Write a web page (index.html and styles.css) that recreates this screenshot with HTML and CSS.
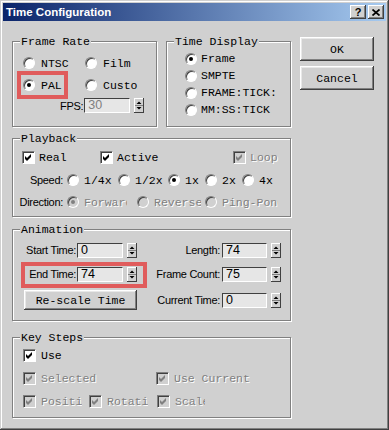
FILE: index.html
```html
<!DOCTYPE html>
<html lang="en">
  <head>
    <meta charset="UTF-8" />
    <title>Time Configuration</title>
    <link rel="stylesheet" href="styles.css">
  </head>
  <body>
    <div class="window">
      <div class="titlebar">
        <span class="title">Time Configuration</span>
        <div class="caption-buttons">
          <span class="cap-btn">?</span>
          <span class="cap-btn">
            <svg width="8" height="7" viewBox="0 0 8 7"><path d="M0.5 0.5L7.5 6.5M7.5 0.5L0.5 6.5" stroke="#000" stroke-width="1.7"/></svg>
          </span>
        </div>
      </div>

      <div class="client">
        <div class="groups">
          <div class="top-row">
            <fieldset class="group frame-rate">
              <legend>Frame Rate</legend>
              <div class="fr-options">
                <div class="opt"><span class="radio"></span>NTSC</div>
                <div class="opt"><span class="radio"></span>Film</div>
                <div class="opt marked"><span class="radio on"></span>PAL<span class="mark mark-pal"></span></div>
                <div class="opt"><span class="radio"></span>Custo</div>
              </div>
              <div class="fps-row">
                <span class="flbl">FPS:</span>
                <span class="field dim-field">30</span>
                <span class="spin"><svg width="10" height="15" viewBox="0 0 10 15"><path d="M1 7.5H9" stroke="#808080"/><path d="M2.5 6L5 3.5L7.5 6Z M2.5 9L5 11.5L7.5 9Z" fill="#000"/></svg></span>
              </div>
            </fieldset>

            <fieldset class="group time-display">
              <legend>Time Display</legend>
              <div class="td-options">
                <div class="opt"><span class="radio on"></span>Frame</div>
                <div class="opt"><span class="radio"></span>SMPTE</div>
                <div class="opt"><span class="radio"></span>FRAME:TICK:</div>
                <div class="opt"><span class="radio"></span>MM:SS:TICK</div>
              </div>
            </fieldset>
          </div>

          <fieldset class="group playback">
            <legend>Playback</legend>
            <div class="pb-checks">
              <div class="chk real"><span class="check"><svg width="11" height="11" viewBox="0 0 11 11"><path d="M2 4L4 6L8 2V5L4 9L2 7Z" fill="#000"/></svg></span>Real</div>
              <div class="chk active"><span class="check"><svg width="11" height="11" viewBox="0 0 11 11"><path d="M2 4L4 6L8 2V5L4 9L2 7Z" fill="#000"/></svg></span>Active</div>
              <div class="chk dim"><span class="check dis"><svg width="11" height="11" viewBox="0 0 11 11"><path d="M2 4L4 6L8 2V5L4 9L2 7Z" fill="#808080"/></svg></span>Loop</div>
            </div>
            <div class="pb-row">
              <span class="row-lbl">Speed:</span>
              <div class="opt sp-quarter"><span class="radio"></span>1/4x</div>
              <div class="opt sp-half"><span class="radio"></span>1/2x</div>
              <div class="opt sp-one"><span class="radio on"></span>1x</div>
              <div class="opt sp-two"><span class="radio"></span>2x</div>
              <div class="opt"><span class="radio"></span>4x</div>
            </div>
            <div class="pb-row">
              <span class="row-lbl">Direction:</span>
              <div class="opt dim dir-fwd"><span class="radio dis on"></span><span class="clip">Forward</span></div>
              <div class="opt dim dir-rev"><span class="radio dis"></span><span class="clip">Reverse</span></div>
              <div class="opt dim dir-ping"><span class="radio dis"></span><span class="clip">Ping-Pong</span></div>
            </div>
          </fieldset>

          <fieldset class="group animation">
            <legend>Animation</legend>
            <div class="anim-grid">
              <div class="spin-field">
                <span class="flbl left-lbl">Start Time:</span>
                <span class="field">0</span>
                <span class="spin"><svg width="10" height="15" viewBox="0 0 10 15"><path d="M1 7.5H9" stroke="#808080"/><path d="M2.5 6L5 3.5L7.5 6Z M2.5 9L5 11.5L7.5 9Z" fill="#000"/></svg></span>
              </div>
              <div class="spin-field">
                <span class="flbl right-lbl">Length:</span>
                <span class="field">74</span>
                <span class="spin"><svg width="10" height="15" viewBox="0 0 10 15"><path d="M1 7.5H9" stroke="#808080"/><path d="M2.5 6L5 3.5L7.5 6Z M2.5 9L5 11.5L7.5 9Z" fill="#000"/></svg></span>
              </div>
              <div class="spin-field marked">
                <span class="flbl left-lbl">End Time:</span>
                <span class="field">74</span>
                <span class="spin"><svg width="10" height="15" viewBox="0 0 10 15"><path d="M1 7.5H9" stroke="#808080"/><path d="M2.5 6L5 3.5L7.5 6Z M2.5 9L5 11.5L7.5 9Z" fill="#000"/></svg></span>
                <span class="mark mark-end"></span>
              </div>
              <div class="spin-field">
                <span class="flbl right-lbl">Frame Count:</span>
                <span class="field">75</span>
                <span class="spin"><svg width="10" height="15" viewBox="0 0 10 15"><path d="M1 7.5H9" stroke="#808080"/><path d="M2.5 6L5 3.5L7.5 6Z M2.5 9L5 11.5L7.5 9Z" fill="#000"/></svg></span>
              </div>
              <div class="btn rescale">Re-scale Time</div>
              <div class="spin-field">
                <span class="flbl right-lbl">Current Time:</span>
                <span class="field">0</span>
                <span class="spin"><svg width="10" height="15" viewBox="0 0 10 15"><path d="M1 7.5H9" stroke="#808080"/><path d="M2.5 6L5 3.5L7.5 6Z M2.5 9L5 11.5L7.5 9Z" fill="#000"/></svg></span>
              </div>
            </div>
          </fieldset>

          <fieldset class="group key-steps">
            <legend>Key Steps</legend>
            <div class="ks-rows">
              <div class="chk"><span class="check"><svg width="11" height="11" viewBox="0 0 11 11"><path d="M2 4L4 6L8 2V5L4 9L2 7Z" fill="#000"/></svg></span>Use</div>
              <div class="ks-row">
                <div class="chk dim ks-selected"><span class="check dis"><svg width="11" height="11" viewBox="0 0 11 11"><path d="M2 4L4 6L8 2V5L4 9L2 7Z" fill="#808080"/></svg></span>Selected</div>
                <div class="chk dim"><span class="check dis"><svg width="11" height="11" viewBox="0 0 11 11"><path d="M2 4L4 6L8 2V5L4 9L2 7Z" fill="#808080"/></svg></span>Use Current</div>
              </div>
              <div class="ks-row">
                <div class="chk dim ks-pos"><span class="check dis"><svg width="11" height="11" viewBox="0 0 11 11"><path d="M2 4L4 6L8 2V5L4 9L2 7Z" fill="#808080"/></svg></span><span class="clip">Position</span></div>
                <div class="chk dim ks-rot"><span class="check dis"><svg width="11" height="11" viewBox="0 0 11 11"><path d="M2 4L4 6L8 2V5L4 9L2 7Z" fill="#808080"/></svg></span><span class="clip">Rotation</span></div>
                <div class="chk dim ks-scale"><span class="check dis"><svg width="11" height="11" viewBox="0 0 11 11"><path d="M2 4L4 6L8 2V5L4 9L2 7Z" fill="#808080"/></svg></span><span class="clip">Scale</span></div>
              </div>
            </div>
          </fieldset>
        </div>

        <div class="buttons">
          <div class="btn">OK</div>
          <div class="btn">Cancel</div>
        </div>
      </div>
    </div>
  </body>
</html>
```

FILE: styles.css
```css
:root {
  --face: #d0d0d0;
  --shadow: #808080;
  --dark: #404040;
  --light: #ffffff;
  --field: #e6e6e6;
  --mark: #e05c5c;
}

body {
  margin: 0;
  background: var(--face);
  font-family: "Liberation Mono", monospace;
  font-size: 11.5px;
  color: #000;
  overflow: hidden;
}

.window {
  width: 389px;
  height: 430px;
  box-sizing: border-box;
  padding: 3px;
  background: var(--face);
  box-shadow: inset -1px -1px var(--dark), inset 1px 1px var(--face),
    inset -2px -2px var(--shadow), inset 2px 2px var(--light);
}

/* title bar */
.titlebar {
  height: 18px;
  display: flex;
  align-items: center;
  justify-content: space-between;
  padding: 0 2px 0 3px;
  background: linear-gradient(to right, #0a246a, #a6caf0);
}

.title {
  font-family: "Liberation Sans", sans-serif;
  font-weight: bold;
  font-size: 11.5px;
  color: #fff;
}

.caption-buttons {
  display: flex;
  gap: 2px;
}

.cap-btn {
  width: 16px;
  height: 14px;
  box-sizing: border-box;
  display: flex;
  align-items: center;
  justify-content: center;
  background: var(--face);
  font: bold 11px "Liberation Sans", sans-serif;
  box-shadow: inset -1px -1px var(--dark), inset 1px 1px var(--light),
    inset -2px -2px var(--shadow);
}

/* client area */
.client {
  display: flex;
  gap: 9px;
  padding: 14px 0 0 9px;
}

.groups {
  width: 279px;
  display: flex;
  flex-direction: column;
}

.top-row {
  display: flex;
  gap: 9px;
}

.group {
  margin: 0;
  padding: 0;
  min-width: 0;
  box-sizing: border-box;
  border: 1px solid var(--shadow);
  box-shadow: 1px 1px 0 var(--light), inset 1px 1px 0 var(--light);
}

.group legend {
  margin-left: 7px;
  padding: 0 1px;
  line-height: 13px;
  background: var(--face);
}

.frame-rate {
  width: 145px;
  height: 92px;
  padding-top: 8px;
}

.time-display {
  width: 125px;
  height: 92px;
  padding-top: 2px;
}

.playback {
  height: 85px;
  margin-top: 5px;
  padding-top: 5px;
}

.animation {
  height: 98px;
  margin-top: 6px;
  padding-top: 6px;
}

.key-steps {
  height: 87px;
  margin-top: 10px;
  padding-top: 4px;
}

/* radios and checkboxes */
.opt,
.chk {
  display: flex;
  align-items: center;
  height: 14px;
  white-space: nowrap;
  position: relative;
}

.radio {
  flex: none;
  width: 12px;
  height: 12px;
  box-sizing: border-box;
  border-radius: 50%;
  border: 1px solid;
  border-color: var(--shadow) var(--light) var(--light) var(--shadow);
  background: var(--light);
  box-shadow: inset 1px 1px 0 var(--dark);
  position: relative;
  margin-right: 5px;
}

.radio.on::after {
  content: "";
  position: absolute;
  left: 3px;
  top: 3px;
  width: 4px;
  height: 4px;
  border-radius: 50%;
  background: #000;
}

.radio.dis {
  background: var(--face);
}

.radio.dis.on::after {
  background: var(--shadow);
}

.check {
  flex: none;
  width: 13px;
  height: 13px;
  box-sizing: border-box;
  border: 1px solid;
  border-color: var(--shadow) var(--light) var(--light) var(--shadow);
  background: var(--light);
  box-shadow: inset 1px 1px 0 var(--dark);
  margin-right: 5px;
}

.check svg {
  display: block;
}

.check.dis {
  background: var(--face);
}

.dim {
  color: var(--shadow);
  text-shadow: 1px 1px 0 var(--light);
}

.clip {
  overflow: hidden;
  display: block;
}

/* annotation boxes */
.mark {
  position: absolute;
  border: 4px solid var(--mark);
  box-sizing: border-box;
}

.mark-pal {
  left: -6px;
  top: -7px;
  width: 51px;
  height: 28px;
}

.mark-end {
  left: 8px;
  top: -4px;
  width: 126px;
  height: 26px;
}

/* frame rate */
.fr-options {
  display: grid;
  grid-template-columns: 62px 1fr;
  row-gap: 8px;
  padding-left: 10px;
}

.fr-options .radio {
  margin-right: 6px;
}

.fps-row {
  display: flex;
  align-items: center;
  margin-top: 6px;
  padding-left: 47px;
  height: 15px;
}

.fps-row .flbl {
  margin-right: 1px;
}

/* time display */
.td-options {
  padding-left: 18px;
}

.td-options .opt {
  height: 17px;
}

.td-options .radio {
  margin-right: 4px;
}

/* playback */
.pb-checks {
  display: flex;
  padding-left: 9px;
}

.pb-checks .check {
  margin-right: 4px;
}

.real {
  width: 78px;
}

.active {
  width: 133px;
}

.pb-row {
  display: flex;
  align-items: center;
  height: 14px;
  margin-top: 8px;
}

.pb-checks + .pb-row {
  margin-top: 9px;
}

.row-lbl {
  width: 50px;
  text-align: right;
  margin-right: 4px;
  font-family: "Liberation Sans", sans-serif;
  font-size: 11px;
  letter-spacing: -0.3px;
}

.sp-quarter { width: 51px; }
.sp-half { width: 50px; }
.sp-one { width: 37px; }
.sp-two { width: 37px; }

.dir-fwd { width: 70px; }
.dir-fwd .clip { width: 43px; }
.dir-rev { width: 68px; }
.dir-rev .clip { width: 47px; }
.dir-ping .clip { width: 56px; }

/* spinner fields */
.flbl {
  font-family: "Liberation Sans", sans-serif;
  font-size: 11px;
  letter-spacing: -0.3px;
  text-align: right;
  white-space: nowrap;
}

.field {
  width: 46px;
  height: 15px;
  box-sizing: border-box;
  border: 1px solid;
  border-color: var(--dark) var(--light) var(--light) var(--dark);
  background: var(--field);
  padding-left: 3px;
  font-family: "Liberation Sans", sans-serif;
  font-size: 12.5px;
  line-height: 13px;
}

.dim-field {
  color: var(--shadow);
}

.spin {
  flex: none;
  width: 10px;
  height: 15px;
  margin-left: 4px;
  background: var(--face);
  box-shadow: inset -1px -1px var(--dark), inset 1px 1px var(--light);
}

.spin svg {
  display: block;
}

.anim-grid {
  display: grid;
  grid-template-columns: 124px 1fr;
  grid-template-rows: 16px 16px 20px;
  column-gap: 10px;
  row-gap: 8px;
}

.spin-field {
  display: flex;
  align-items: center;
  position: relative;
}

.left-lbl {
  width: 63px;
  margin-right: 1px;
}

.right-lbl {
  width: 73px;
  margin-right: 2px;
}

.spin-field .right-lbl + .field {
  width: 45px;
}

/* buttons */
.btn {
  height: 24px;
  box-sizing: border-box;
  display: flex;
  align-items: center;
  justify-content: center;
  background: var(--face);
  box-shadow: inset -1px -1px var(--dark), inset 1px 1px var(--light),
    inset -2px -2px var(--shadow), inset 2px 2px #e8e8e8;
}

.rescale {
  width: 113px;
  height: 20px;
  margin-left: 11px;
}

.buttons {
  width: 74px;
  display: flex;
  flex-direction: column;
  gap: 5px;
  margin-top: 2px;
}

/* key steps */
.ks-rows {
  display: flex;
  flex-direction: column;
  gap: 9px;
  padding-left: 10px;
}

.ks-row {
  display: flex;
}

.ks-selected { width: 133px; }
.ks-pos { width: 66px; }
.ks-pos .clip { width: 41px; }
.ks-rot { width: 68px; }
.ks-rot .clip { width: 41px; }
.ks-scale .clip { width: 30px; }
```
